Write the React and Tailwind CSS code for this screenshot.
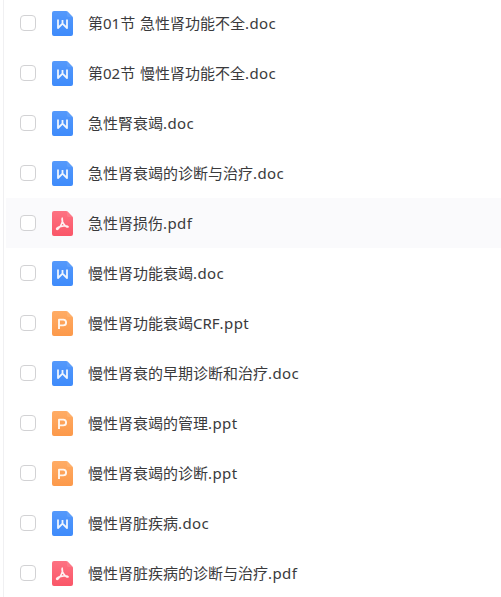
import React from "react";
import clsx from "clsx";

const files = [
    { name: "第01节 急性肾功能不全", ext: "doc" },
    { name: "第02节 慢性肾功能不全", ext: "doc" },
    { name: "急性腎衰竭", ext: "doc" },
    { name: "急性肾衰竭的诊断与治疗", ext: "doc" },
    { name: "急性肾损伤", ext: "pdf", active: true },
    { name: "慢性肾功能衰竭", ext: "doc" },
    { name: "慢性肾功能衰竭CRF", ext: "ppt" },
    { name: "慢性肾衰的早期诊断和治疗", ext: "doc" },
    { name: "慢性肾衰竭的管理", ext: "ppt" },
    { name: "慢性肾衰竭的诊断", ext: "ppt" },
    { name: "慢性肾脏疾病", ext: "doc" },
    { name: "慢性肾脏疾病的诊断与治疗", ext: "pdf" },
];

// page colour, folded corner colour and glyph stroke for each file type
const types = {
    doc: {
        from: "#5599fb",
        to: "#3e8bfb",
        fold: "#7db2fd",
        glyph: <path d="M6 8.6V17L10.5 12.6L15 17V8.6M10.5 9V12.6" strokeWidth="1.8" />,
    },
    ppt: {
        from: "#ffac65",
        to: "#fc994a",
        fold: "#ffc28c",
        glyph: <path d="M7 18V8.6H11.2A2.9 2.9 0 0 1 11.2 14.4H7" strokeWidth="1.9" />,
    },
    pdf: {
        from: "#fd7282",
        to: "#fa5668",
        fold: "#ff98a3",
        glyph: (
            <path
                d="M10.2 7.2C11.2 9.9 9.2 15.6 5.6 18.3C3.6 18.6 4.5 16.3 9 15.4C12.2 14.7 15.7 14.5 16.1 15.8C15.3 17 11.4 13.7 10.4 10.5C10 9 9.7 7.9 10.2 7.2Z"
                strokeWidth="1.6"
            />
        ),
    },
};

const FileIcon = ({ ext }) => {
    const { from, to, fold, glyph } = types[ext];
    const id = `page-${ext}`;

    return (
        <svg width="21" height="25" viewBox="0 0 21 25" fill="none" className="shrink-0">
            <defs>
                <linearGradient id={id} x1="0" y1="0" x2="0" y2="1">
                    <stop stopColor={from} />
                    <stop offset="1" stopColor={to} />
                </linearGradient>
            </defs>
            <path
                d="M2 0H14.2Q15 0 15.6 .6L20.4 5.4Q21 6 21 6.8V23A2 2 0 0 1 19 25H2A2 2 0 0 1 0 23V2A2 2 0 0 1 2 0Z"
                fill={`url(#${id})`}
            />
            <path d="M15 .2L20.8 6H16.5A1.5 1.5 0 0 1 15 4.5Z" fill={fold} fillOpacity="0.3" />
            <g stroke="#fff" strokeOpacity="0.9" strokeLinejoin="round">
                {glyph}
            </g>
        </svg>
    );
};

const FileRow = ({ name, ext, active }) => (
    <li className={clsx("flex h-[50px] items-center pl-3.5", active && "bg-[#fafafc]")}>
        <span className="size-4 shrink-0 rounded-[4px] border border-[#d2d2d4] bg-white" />
        <span className="ml-4 flex">
            <FileIcon ext={ext} />
        </span>
        <span className="ml-[15px] whitespace-nowrap [word-spacing:1px]">
            {name}
            <span className="tracking-[0.4px]">.{ext}</span>
        </span>
    </li>
);

const App = () => {
    return (
        <div className="h-[597px] w-full overflow-hidden bg-white pl-[3px]">
            <div className="flow-root h-full border-l border-[#f0f0f2] pl-0.5">
                <ul className="-mt-0.5 font-['Noto_Sans','Noto_Sans_CJK_SC',sans-serif] text-[15px] leading-5 text-[#3a3a3c]">
                    {files.map((file) => (
                        <FileRow key={file.name} {...file} />
                    ))}
                </ul>
            </div>
        </div>
    );
};

export default App;
